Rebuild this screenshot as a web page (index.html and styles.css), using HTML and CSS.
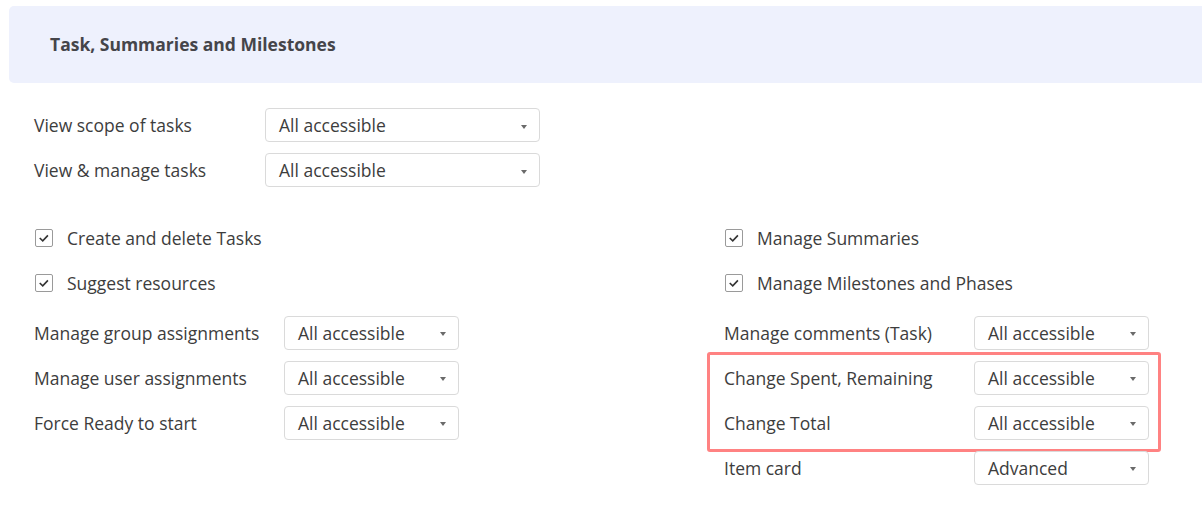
FILE: index.html
```html
<!DOCTYPE html>
<html>
<head>
<meta charset="utf-8">
<link rel="stylesheet" href="styles.css">
</head>
<body>
<section class="panel">
  <div class="panel-head">Task, Summaries and Milestones</div>
  <div class="top-block">
    <div class="row sel-row wide">
      <span class="label">View scope of tasks</span>
      <div class="select big"><span>All accessible</span><i class="caret"></i></div>
    </div>
    <div class="row sel-row wide">
      <span class="label">View &amp; manage tasks</span>
      <div class="select big"><span>All accessible</span><i class="caret"></i></div>
    </div>
  </div>
  <div class="columns">
    <div class="col left">
      <label class="row check-row"><span class="box"><svg viewBox="0 0 18 18"><path d="M4.2 9 L7.6 12.2 L13.4 6" /></svg></span><span class="label">Create and delete Tasks</span></label>
      <label class="row check-row"><span class="box"><svg viewBox="0 0 18 18"><path d="M4.2 9 L7.6 12.2 L13.4 6" /></svg></span><span class="label">Suggest resources</span></label>
      <div class="sel-group">
        <div class="row sel-row">
          <span class="label">Manage group assignments</span>
          <div class="select"><span>All accessible</span><i class="caret"></i></div>
        </div>
        <div class="row sel-row">
          <span class="label">Manage user assignments</span>
          <div class="select"><span>All accessible</span><i class="caret"></i></div>
        </div>
        <div class="row sel-row">
          <span class="label">Force Ready to start</span>
          <div class="select"><span>All accessible</span><i class="caret"></i></div>
        </div>
      </div>
    </div>
    <div class="col right">
      <label class="row check-row"><span class="box"><svg viewBox="0 0 18 18"><path d="M4.2 9 L7.6 12.2 L13.4 6" /></svg></span><span class="label">Manage Summaries</span></label>
      <label class="row check-row"><span class="box"><svg viewBox="0 0 18 18"><path d="M4.2 9 L7.6 12.2 L13.4 6" /></svg></span><span class="label">Manage Milestones and Phases</span></label>
      <div class="sel-group">
        <div class="row sel-row">
          <span class="label">Manage comments (Task)</span>
          <div class="select"><span>All accessible</span><i class="caret"></i></div>
        </div>
        <div class="highlight">
          <div class="row sel-row">
            <span class="label">Change Spent, Remaining</span>
            <div class="select"><span>All accessible</span><i class="caret"></i></div>
          </div>
          <div class="row sel-row">
            <span class="label">Change Total</span>
            <div class="select"><span>All accessible</span><i class="caret"></i></div>
          </div>
        </div>
        <div class="row sel-row">
          <span class="label">Item card</span>
          <div class="select"><span>Advanced</span><i class="caret"></i></div>
        </div>
      </div>
    </div>
  </div>
</section>
</body>
</html>
```

FILE: styles.css
```css
* { box-sizing: border-box; }
html, body { margin: 0; padding: 0; background: #fff; }
body {
  font-family: "Open Sans", "Noto Sans", sans-serif;
  font-size: 17.5px;
  color: #3d3d3d;
}
.panel { padding: 6px 0 0 9px; }
.panel-head {
  background: #eef1fd;
  border-radius: 5px 0 0 5px;
  height: 77px;
  display: flex;
  align-items: center;
  padding-left: 41px;
  padding-bottom: 2px;
  font-weight: 700;
  font-size: 17.5px;
  color: #45454a;
}
.top-block {
  margin-top: 25px;
  padding-left: 25px;
  display: flex;
  flex-direction: column;
  gap: 11px;
}
.row { display: flex; align-items: center; }
.sel-row { height: 45px; }
.top-block .sel-row { height: 34px; }
.sel-row .label { width: 250px; flex: none; }
.sel-row.wide .label { width: 231px; }
.select {
  width: 175px;
  height: 34px;
  border: 1px solid #dadada;
  border-radius: 4px;
  display: flex;
  align-items: center;
  justify-content: space-between;
  padding: 0 12px 0 13px;
  background: #fff;
}
.select.big { width: 275px; }
.caret {
  width: 0; height: 0;
  border-left: 3.5px solid transparent;
  border-right: 3.5px solid transparent;
  border-top: 4px solid #6a6a6a;
  margin-top: 3px;
}
.columns {
  display: flex;
  padding-left: 25px;
  margin-top: 28px;
}
.col { display: flex; flex-direction: column; width: 425px; }
.col.left { margin-right: 265px; }
.check-row { height: 45px; cursor: default; }
.box {
  width: 18px; height: 18px;
  border: 1px solid #9a9a9a;
  border-radius: 2px;
  margin-left: 1px;
  margin-right: 14px;
  flex: none;
  display: flex;
}
.box svg { width: 16px; height: 16px; }
.box path { fill: none; stroke: #333; stroke-width: 1.8; }
.sel-group { margin-top: 5px; }
.highlight {
  border: 3px solid #ff8282;
  border-radius: 3px;
  margin: -3px -12px -6.5px -17px;
  padding: 0 9px 3.5px 14px;
}
```
